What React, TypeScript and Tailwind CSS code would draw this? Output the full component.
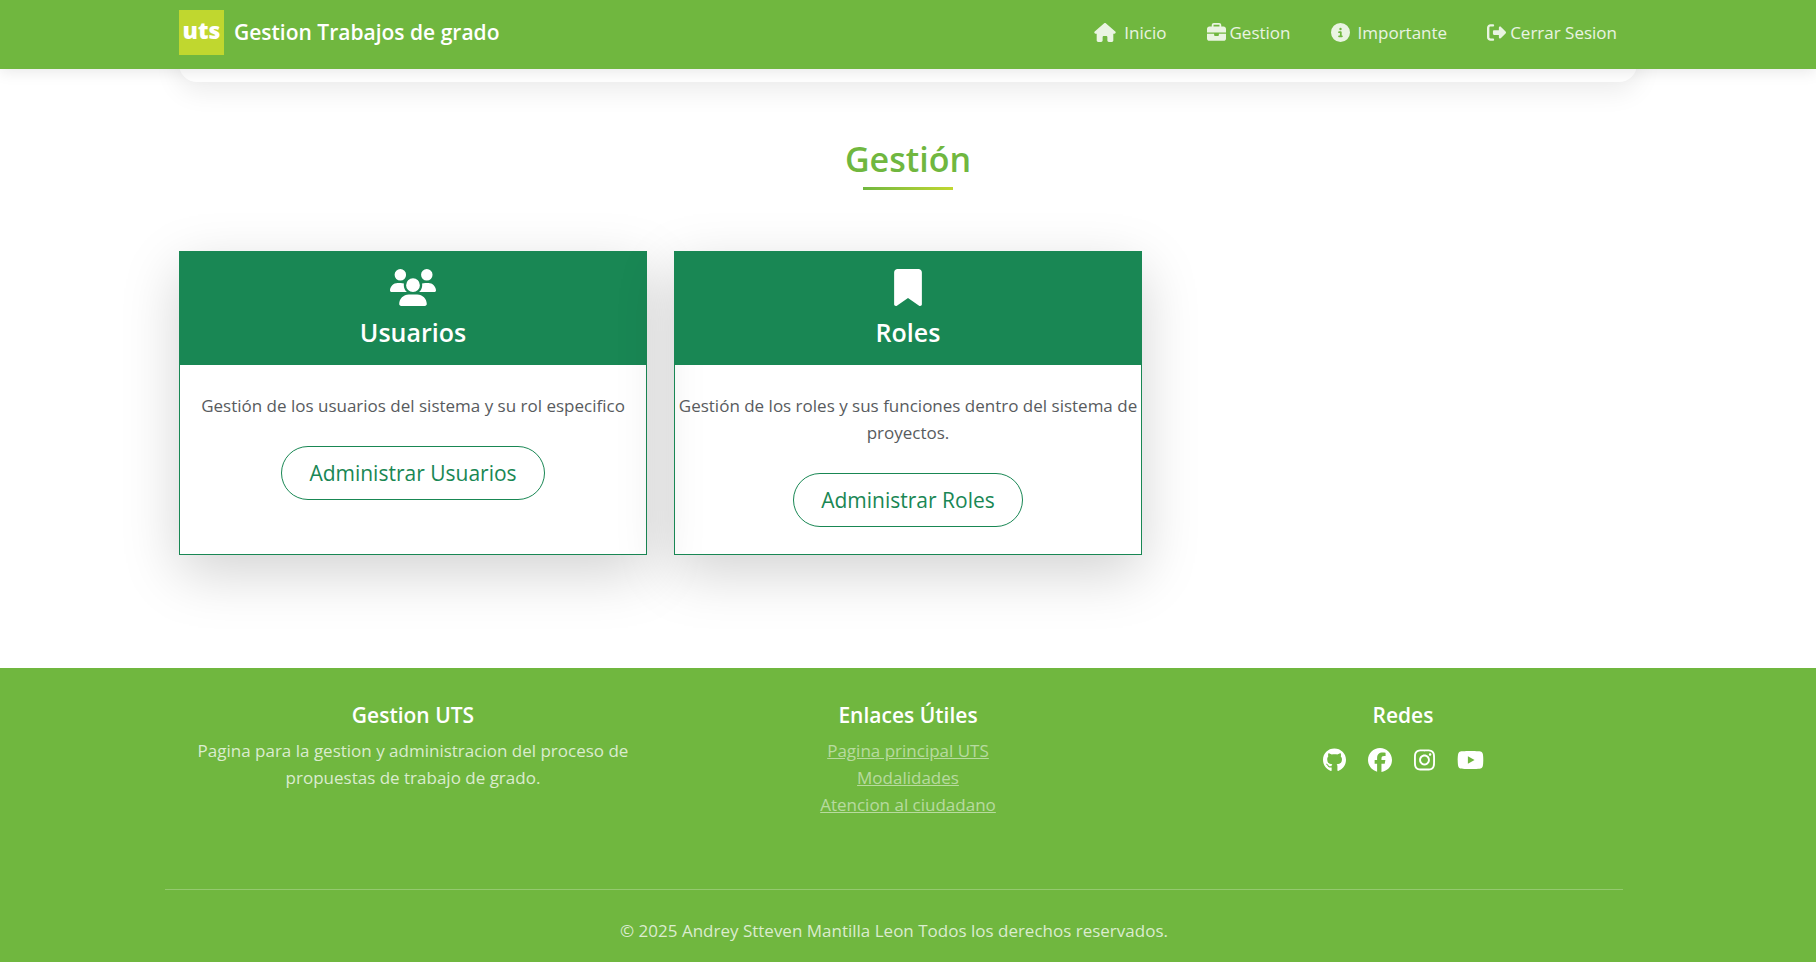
import type { ReactNode } from "react";
import {
  FaBookmark,
  FaBriefcase,
  FaCircleInfo,
  FaFacebook,
  FaGithub,
  FaHouse,
  FaInstagram,
  FaRightFromBracket,
  FaUsers,
  FaYoutube,
} from "react-icons/fa6";

const container = "mx-auto w-full max-w-[1486px] px-[14px]";

function NavLink({ icon, label, wide }: { icon: ReactNode; label: string; wide?: boolean }) {
  return (
    <a
      href="#"
      className={
        wide
          ? "flex items-center gap-2 whitespace-nowrap text-white/85"
          : "flex items-center gap-1 whitespace-nowrap text-white/85"
      }
    >
      {icon}
      {label}
    </a>
  );
}

function Card({
  icon,
  title,
  text,
  action,
}: {
  icon: ReactNode;
  title: string;
  text: string;
  action: string;
}) {
  return (
    <article className="flex flex-col border border-[#198754] text-center shadow-[0_18px_54px_rgba(0,0,0,0.175)]">
      <header className="flex flex-col items-center gap-2 bg-[#198754] pt-[17px] pb-[15px] text-white">
        {icon}
        <h3 className="text-[25px] leading-9 font-semibold">{title}</h3>
      </header>
      <div className="flex flex-col items-center gap-[27px] py-[27px]">
        <p className="text-[17px] leading-[27px] text-[#585b5e]">{text}</p>
        <button
          type="button"
          className="h-[54px] rounded-full border border-[#198754] px-[27px] text-[21px] leading-8 text-[#198754]"
        >
          {action}
        </button>
      </div>
    </article>
  );
}

export default function App() {
  return (
    <div className="flex min-h-screen flex-col bg-white font-['Open_Sans','Noto_Sans',sans-serif] text-[17px] leading-[27px]">
      <header className="sticky top-0 z-10 bg-[#70b73f] shadow-[0_2px_15px_rgba(0,0,0,0.1)]">
        <div className={container}>
          <div className="flex h-[69px] items-center justify-between pb-1">
            <a href="#" className="flex items-center gap-[10px] text-white">
              <span className="flex size-[45px] items-center justify-center bg-[#c0d72f] pb-1 text-[23px] leading-none font-extrabold">
                uts
              </span>
              <span className="text-[21px] font-semibold whitespace-nowrap">
                Gestion Trabajos de grado
              </span>
            </a>
            <nav className="flex items-center gap-10 pr-5">
              <NavLink wide icon={<FaHouse className="h-[19px] w-[22px]" />} label="Inicio" />
              <NavLink icon={<FaBriefcase className="size-[19px]" />} label="Gestion" />
              <NavLink wide icon={<FaCircleInfo className="size-[19px]" />} label="Importante" />
              <NavLink icon={<FaRightFromBracket className="size-[19px]" />} label="Cerrar Sesion" />
            </nav>
          </div>
        </div>
      </header>

      <main className="grow">
        <div className={container}>
          <div className="-mt-10 h-[53px] rounded-b-[18px] bg-white shadow-[0_9px_27px_rgba(0,0,0,0.08)]" />

          <section className="pt-[54px] pb-[113px]">
            <h2 className="text-center text-[34px] leading-[46px] font-semibold text-[#70b73f]">
              Gestión
            </h2>
            <div className="mx-auto mt-[5px] h-[3px] w-[90px] bg-gradient-to-r from-[#70b73f] to-[#c0d72f]" />
            <div className="mt-[61px] grid grid-cols-1 gap-[27px] md:grid-cols-3">
              <Card
                icon={<FaUsers className="h-[37px] w-[46px]" />}
                title="Usuarios"
                text="Gestión de los usuarios del sistema y su rol especifico"
                action="Administrar Usuarios"
              />
              <Card
                icon={<FaBookmark className="h-[37px] w-7" />}
                title="Roles"
                text="Gestión de los roles y sus funciones dentro del sistema de proyectos."
                action="Administrar Roles"
              />
            </div>
          </section>
        </div>
      </main>

      <footer className="bg-[#70b73f] pt-8 pb-[18px] text-white">
        <div className={container}>
          <div className="grid grid-cols-1 gap-[27px] text-center md:grid-cols-3">
            <div>
              <h5 className="text-[21px] leading-[30px] font-semibold">Gestion UTS</h5>
              <p className="mt-[7px] px-[13px] text-white/75">
                Pagina para la gestion y administracion del proceso de propuestas de trabajo de
                grado.
              </p>
            </div>
            <div>
              <h5 className="text-[21px] leading-[30px] font-semibold">Enlaces Útiles</h5>
              <ul className="mt-[7px] text-white/50">
                <li>
                  <a href="#" className="underline">Pagina principal UTS</a>
                </li>
                <li>
                  <a href="#" className="underline">Modalidades</a>
                </li>
                <li>
                  <a href="#" className="underline">Atencion al ciudadano</a>
                </li>
              </ul>
            </div>
            <div>
              <h5 className="text-[21px] leading-[30px] font-semibold">Redes</h5>
              <div className="mt-[18px] flex justify-center gap-[22px]">
                <a href="#" aria-label="GitHub"><FaGithub className="h-6 w-[23px]" /></a>
                <a href="#" aria-label="Facebook"><FaFacebook className="size-6" /></a>
                <a href="#" aria-label="Instagram"><FaInstagram className="h-6 w-[21px]" /></a>
                <a href="#" aria-label="YouTube"><FaYoutube className="h-6 w-[27px]" /></a>
              </div>
            </div>
          </div>
          <div className="mt-[71px] mr-[14px] -ml-[14px] border-t border-white/25 pt-[27px] text-center text-white/75">
            © 2025 Andrey Stteven Mantilla Leon Todos los derechos reservados.
          </div>
        </div>
      </footer>
    </div>
  );
}
